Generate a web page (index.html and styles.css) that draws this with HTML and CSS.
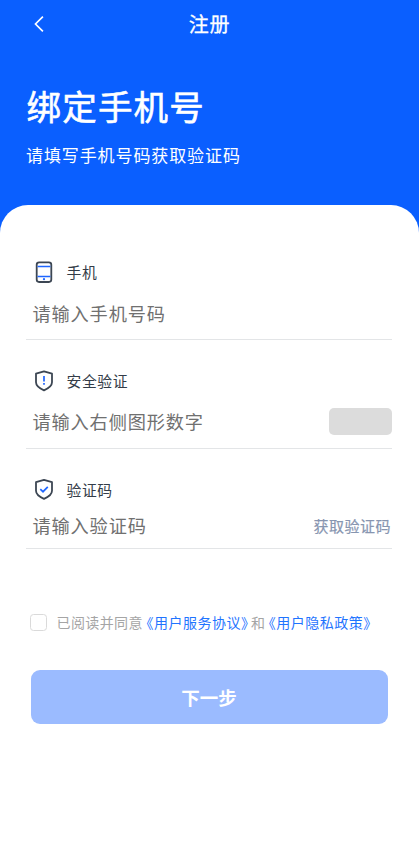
FILE: index.html
```html
<!DOCTYPE html>
<html lang="zh-CN">
<head>
<meta charset="utf-8">
<title>注册</title>
<link rel="stylesheet" href="styles.css">
</head>
<body>
<header class="hero">
  <nav class="bar">
    <svg class="back" viewBox="0 0 12 18" aria-hidden="true"><path d="M9.9 1.7 2.5 9l7.4 7.3"/></svg>
    <span class="bar-title">注册</span>
  </nav>
  <h1 class="title">绑定手机号</h1>
  <p class="subtitle">请填写手机号码获取验证码</p>
</header>
<main class="panel">
  <section class="field">
    <div class="label">
      <svg class="icon" viewBox="0 0 20 24"><rect class="dark" x="2.7" y="2.3" width="14.6" height="19.7" rx="2.4"/><path class="blue" d="M3.6 6.5h12.8M3.6 16.5h12.8"/><circle class="dot" cx="10" cy="19.2" r="1.1"/></svg>
      <span>手机</span>
    </div>
    <div class="entry"><span>请输入手机号码</span></div>
  </section>
  <section class="field">
    <div class="label">
      <svg class="icon" viewBox="0 0 20 24"><path class="dark" d="M10 2.3 18 4.7v8.6c0 3.8-3.7 6.2-8 8.1-4.3-1.9-8-4.3-8-8.1V4.7z"/><path class="blue" d="M10 7v5.4M10 14v1.8"/></svg>
      <span>安全验证</span>
    </div>
    <div class="entry"><span>请输入右侧图形数字</span><span class="captcha"></span></div>
  </section>
  <section class="field short">
    <div class="label">
      <svg class="icon" viewBox="0 0 20 24"><path class="dark" d="M10 2.8 18 5.2v8.6c0 3.8-3.7 6.2-8 8.1-4.3-1.9-8-4.3-8-8.1V5.2z"/><path class="blue" d="m6.3 12.2 2.7 2.5 4.8-4.8"/></svg>
      <span>验证码</span>
    </div>
    <div class="entry"><span>请输入验证码</span><span class="send">获取验证码</span></div>
  </section>
  <div class="agree">
    <span class="check"></span>
    <span>已阅读并同意</span><span class="link">《用户服务协议》</span><span class="and">和</span><span class="link">《用户隐私政策》</span>
  </div>
  <button class="next">下一步</button>
</main>
</body>
</html>
```

FILE: styles.css
```css
* { box-sizing: border-box; }
body {
  margin: 0;
  min-height: 856px;
  background: #0a5fff;
  font-family: "Noto Sans CJK SC", sans-serif;
  display: flex;
  flex-direction: column;
}
.hero { height: 205px; color: #fff; }
.bar {
  height: 47px;
  display: grid;
  grid-template-columns: 60px 1fr 60px;
  align-items: center;
}
.back {
  width: 12px;
  height: 18px;
  margin-left: 33px;
  fill: none;
  stroke: #fff;
  stroke-width: 1.7;
}
.bar-title {
  text-align: center;
  font-size: 20px;
  letter-spacing: 0.8px;
  -webkit-text-stroke: 0.3px #fff;
}
.title {
  margin: 33px 0 0 26.5px;
  font-size: 34.5px;
  line-height: 50px;
  font-weight: 400;
  letter-spacing: 1.2px;
  -webkit-text-stroke: 0.6px #fff;
}
.subtitle {
  margin: 13px 0 0 26px;
  font-size: 17px;
  line-height: 24px;
  letter-spacing: 0.9px;
}
.panel {
  flex: 1;
  padding: 53px 27px 0 26px;
  background: #fff;
  border-radius: 28px 28px 0 0;
}
.field {
  height: 108.5px;
  display: flex;
  flex-direction: column;
}
.label {
  height: 28px;
  padding-left: 8px;
  display: flex;
  align-items: center;
  gap: 12.5px;
  color: #333c48;
  font-size: 14.8px;
  letter-spacing: 0.6px;
}
.label span { margin-top: -1px; }
.icon { width: 20px; height: 24px; fill: none; }
.dark { stroke: #3c4653; stroke-width: 1.8; stroke-linejoin: round; }
.blue { stroke: #1f66ff; stroke-width: 1.7; }
.dot { fill: #1f66ff; }
.entry {
  height: 54px;
  padding-left: 6.5px;
  display: flex;
  align-items: center;
  justify-content: space-between;
  border-bottom: 1px solid #e3e5e7;
  color: #707070;
  font-size: 18.2px;
  letter-spacing: 0.85px;
}
.short { height: 92px; }
.short .label span { margin-top: 0; }
.short .entry { height: 46px; padding-bottom: 1px; }
.captcha {
  width: 63px;
  height: 27px;
  border-radius: 5px;
  background: #dcdcdc;
}
.send {
  margin-right: 1px;
  color: #8795b0;
  font-size: 15px;
  letter-spacing: 0.5px;
  -webkit-text-stroke: 0.2px #8795b0;
}
.agree {
  height: 24px;
  margin: 43px 0 0 4px;
  display: flex;
  align-items: center;
  color: #a5a5a5;
  font-size: 14px;
  letter-spacing: 0.4px;
  white-space: nowrap;
}
.check {
  width: 17px;
  height: 17px;
  margin-right: 9.5px;
  border: 1.5px solid #dadada;
  border-radius: 3.5px;
}
.link {
  margin-left: 3.5px;
  color: #1f74ff;
  font-feature-settings: "halt";
  letter-spacing: 0.5px;
}
.and { margin-left: 2.5px; }
.next {
  display: block;
  width: 357px;
  height: 54px;
  margin: 36px 0 0 4.5px;
  padding: 0 0 1px;
  border: 0;
  border-radius: 9px;
  background: #9bbbff;
  color: #fff;
  font-family: inherit;
  font-size: 18.5px;
  font-weight: 700;
}
```
